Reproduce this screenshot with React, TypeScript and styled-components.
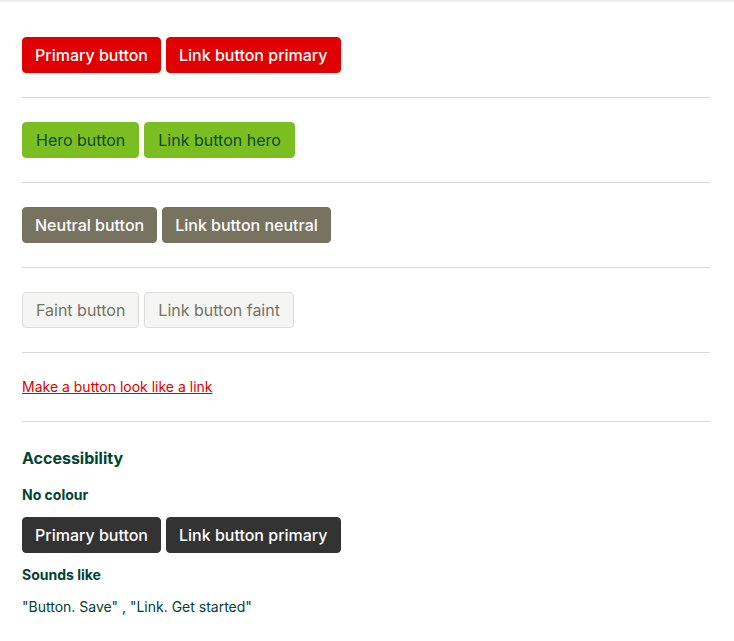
import React from 'react';
import styled, { createGlobalStyle, css } from 'styled-components';

const GlobalStyle = createGlobalStyle`
  body {
    margin: 0;
    background: #fff;
    font-family: Inter, "Liberation Sans", sans-serif;
    color: #004433;
  }
`;

type Variant = 'primary' | 'hero' | 'neutral' | 'faint' | 'mono';

const variants: Record<Variant, ReturnType<typeof css>> = {
  primary: css`
    background: #e00000;
    border-color: #e00000;
    color: #fff;
    font-weight: 500;
  `,
  hero: css`
    background: #7bbe21;
    border-color: #7bbe21;
    color: #0b4a2c;
    font-weight: 400;
    padding: 7px 13px;
  `,
  neutral: css`
    background: #767361;
    border-color: #767361;
    color: #fff;
    font-weight: 500;
  `,
  faint: css`
    background: #f5f5f3;
    border-color: #dcdcd8;
    color: #767361;
    font-weight: 400;
    padding: 7px 13px;
  `,
  mono: css`
    background: #333333;
    border-color: #333333;
    color: #fff;
    font-weight: 500;
  `,
};

const Page = styled.div`
  border-top: 2px solid #eeeeee;
  padding: 35px 24px 20px 22px;
`;

const Section = styled.section`
  padding: 0 0 24px;
  margin-bottom: 24px;
  border-bottom: 1px solid #d9d9d9;
  &:last-child {
    border-bottom: none;
    margin-bottom: 0;
  }
`;

const ButtonRow = styled.div`
  display: flex;
  gap: 5px;
`;

const Button = styled.button<{ $variant: Variant }>`
  font-family: inherit;
  font-size: 16px;
  line-height: 20px;
  padding: 7px 12px;
  border: 1px solid;
  border-radius: 4px;
  cursor: pointer;
  ${(p) => variants[p.$variant]}
`;

const LinkButton = styled.button`
  display: block;
  font-family: inherit;
  font-size: 14px;
  line-height: 20px;
  padding: 0;
  border: none;
  background: none;
  color: #e00000;
  text-decoration: underline;
  cursor: pointer;
`;

const Heading = styled.h3`
  margin: 4px 0 15px;
  font-size: 16px;
  line-height: 24px;
  font-weight: 700;
  color: #004433;
`;

const SubHeading = styled.h4`
  margin: 0 0 12px;
  font-size: 14px;
  line-height: 20px;
  font-weight: 700;
  color: #004433;
`;

const Text = styled.p`
  margin: 0;
  font-size: 14px;
  line-height: 20px;
  color: #004433;
`;

const Spaced = styled.div`
  margin-bottom: 12px;
`;

export default function App() {
  return (
    <>
      <GlobalStyle />
      <Page>
        <Section>
          <ButtonRow>
            <Button $variant="primary">Primary button</Button>
            <Button $variant="primary">Link button primary</Button>
          </ButtonRow>
        </Section>
        <Section>
          <ButtonRow>
            <Button $variant="hero">Hero button</Button>
            <Button $variant="hero">Link button hero</Button>
          </ButtonRow>
        </Section>
        <Section>
          <ButtonRow>
            <Button $variant="neutral">Neutral button</Button>
            <Button $variant="neutral">Link button neutral</Button>
          </ButtonRow>
        </Section>
        <Section>
          <ButtonRow>
            <Button $variant="faint">Faint button</Button>
            <Button $variant="faint">Link button faint</Button>
          </ButtonRow>
        </Section>
        <Section>
          <LinkButton>Make a button look like a link</LinkButton>
        </Section>
        <Section>
          <Heading>Accessibility</Heading>
          <SubHeading>No colour</SubHeading>
          <Spaced>
            <ButtonRow>
              <Button $variant="mono">Primary button</Button>
              <Button $variant="mono">Link button primary</Button>
            </ButtonRow>
          </Spaced>
          <SubHeading>Sounds like</SubHeading>
          <Text>"Button. Save" , "Link. Get started"</Text>
        </Section>
      </Page>
    </>
  );
}
